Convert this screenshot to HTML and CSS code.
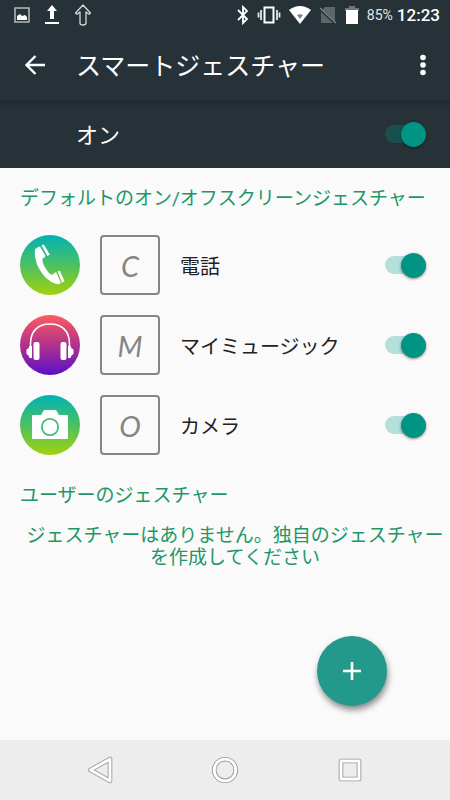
FILE: index.html
```html
<!DOCTYPE html>
<html lang="ja">
<head>
<meta charset="utf-8">
<meta name="viewport" content="width=device-width, initial-scale=1">
<title>スマートジェスチャー</title>
<link rel="stylesheet" href="styles.css">
</head>
<body>
<div class="status">
  <div class="status-group status-notes">
    <svg width="16" height="16" viewBox="0 0 16 16"><path d="M1 1h14v14H1z" fill="none" stroke="#b4babd" stroke-width="1.5"/><path d="M3 13V9l3-2 2 2 3-1 2 2v3z" fill="#fff"/></svg>
    <svg width="16" height="20" viewBox="0 0 16 20"><path d="M8 0l5 6h-3v8H6V6H3zM1 17h14v2H1z" fill="#fff"/></svg>
    <svg width="18" height="22" viewBox="0 0 18 22"><path d="M9 1l7.500 8-1.500 1.200L12 8v11q0 2-3 2t-3-2V8l-3 2.200L1.500 9z" fill="none" stroke="#d4d8da" stroke-width="1.300" stroke-linejoin="round"/></svg>
  </div>
  <div class="status-group status-system">
    <svg width="12" height="20" viewBox="0 0 12 20"><path d="M1 5l9 9-4 4V2l4 4-9 9" fill="none" stroke="#fff" stroke-width="1.800"/></svg>
    <svg width="24" height="18" viewBox="0 0 24 18"><path d="M7.500 1.500h9v15h-9z" fill="none" stroke="#fff" stroke-width="2"/><path d="M4 4v10M20 4v10M1.500 6.500v5M22.500 6.500v5" stroke="#e4e6e7" stroke-width="1.800"/></svg>
    <svg width="22" height="18" viewBox="0 0 22 18"><path d="M0 4q11-8 22 0L11 18z" fill="#fff"/><path d="M8 9q3-1.500 6 0l-3 4z" fill="#7e868a"/></svg>
    <svg width="18" height="18" viewBox="0 0 18 18"><path d="M6 1h10v16H2V5z" fill="#5d666b"/><path d="M0 2l17 16" stroke="#263238" stroke-width="3"/><path d="M1 2l16 15" stroke="#7b8387" stroke-width="1.400"/></svg>
    <svg width="14" height="20" viewBox="0 0 14 20"><path d="M4 1h6v2h4v3H0V3h4z" fill="#6d757a"/><path d="M1 5h12v14H1z" fill="#fff"/></svg>
    <span class="battery">85%</span>
    <span class="clock">12:23</span>
  </div>
</div>

<header class="app-bar">
  <button class="icon-button" type="button" aria-label="戻る">
    <svg width="20" height="20" viewBox="0 0 20 20"><path d="M20 10H2M10.500 1L1.500 10l9 9" fill="none" stroke="#fff" stroke-width="2.400"/></svg>
  </button>
  <h1 class="title">スマートジェスチャー</h1>
  <button class="icon-button menu" type="button" aria-label="その他">
    <svg width="6" height="22" viewBox="0 0 6 22"><g fill="#fff"><circle cx="3" cy="3.500" r="2.800"/><circle cx="3" cy="11" r="2.800"/><circle cx="3" cy="18.500" r="2.800"/></g></svg>
  </button>
</header>

<div class="master">
  <label for="master">オン</label>
  <input class="switch switch-dark" id="master" type="checkbox" role="switch" checked>
</div>

<main class="content">
  <h2 class="section-title">デフォルトのオン/オフスクリーンジェスチャー</h2>
  <ul class="gestures">
    <li class="gesture">
      <svg class="app-icon" viewBox="0 0 60 60">
        <defs><linearGradient id="green" x1="0" y1="0" x2="0" y2="1"><stop offset="0" stop-color="#00b2b5"/><stop offset=".5" stop-color="#4cc063"/><stop offset="1" stop-color="#a1d10c"/></linearGradient></defs>
        <circle cx="30" cy="30" r="30" fill="url(#green)"/>
        <path d="M15 15Q16 12.500 20 11.500L25.500 21Q24.500 23 22.500 23.500Q22 28 26 34Q29 39 32 40L36 37L41 48Q39 50 35 48.500Q27 46 20.500 36Q14 26 15 15z" fill="#fff"/>
        <path d="M21.500 10.500l2.300-1 6 10-2.300 1.400zM37.500 36.700l2.300-1.200 4.700 10.800-2.300 1.400z" fill="#fff"/>
      </svg>
      <span class="sign">C</span>
      <label class="name" for="phone">電話</label>
      <input class="switch" id="phone" type="checkbox" role="switch" checked>
    </li>
    <li class="gesture">
      <svg class="app-icon" viewBox="0 0 60 60">
        <defs><linearGradient id="violet" x1="0" y1="0" x2="0" y2="1"><stop offset="0" stop-color="#ff5a5f"/><stop offset=".5" stop-color="#b0328c"/><stop offset="1" stop-color="#5a10c8"/></linearGradient></defs>
        <circle cx="30" cy="30" r="30" fill="url(#violet)"/>
        <path d="M10.500 32V29C10.500 16 18 9 30 9s19.500 7 19.500 20v3" fill="none" stroke="#fff" stroke-width="1.600"/>
        <path d="M9.500 31h2.500v12H9.500Q9 40 6.500 39V34.500Q9 34 9.500 31zM50.500 31H48v12h2.500q.5-3 3-4v-4.500q-2.500-.5-3-3.500z" fill="#fff"/>
        <rect x="13.500" y="27" width="6" height="18" rx="2" fill="#fff"/><rect x="40.500" y="27" width="6" height="18" rx="2" fill="#fff"/>
      </svg>
      <span class="sign">M</span>
      <label class="name" for="music">マイミュージック</label>
      <input class="switch" id="music" type="checkbox" role="switch" checked>
    </li>
    <li class="gesture">
      <svg class="app-icon" viewBox="0 0 60 60">
        <circle cx="30" cy="30" r="30" fill="url(#green)"/>
        <path d="M13 20h8l3-5h12l3 5h8q1 0 1 1v22q0 1-1 1H13q-1 0-1-1V21q0-1 1-1z" fill="#fff"/>
        <circle cx="30" cy="32" r="8.200" fill="none" stroke="#43bd70" stroke-width="1.800"/>
      </svg>
      <span class="sign">O</span>
      <label class="name" for="camera">カメラ</label>
      <input class="switch" id="camera" type="checkbox" role="switch" checked>
    </li>
  </ul>
  <h2 class="section-title">ユーザーのジェスチャー</h2>
  <p class="empty">ジェスチャーはありません。独自のジェスチャーを作成してください</p>
  <button class="fab" type="button" aria-label="追加">
    <svg width="20" height="20" viewBox="0 0 20 20"><path d="M10 1v18M1 10h18" stroke="#fff" stroke-width="2.600"/></svg>
  </button>
</main>

<nav class="nav">
  <button class="nav-button" type="button" aria-label="戻る">
    <svg width="26" height="28" viewBox="0 0 26 28"><g fill="none" stroke-linejoin="round"><path d="M3.500 14L23 3v22z" stroke="#999" stroke-width="4.600"/><path d="M3.500 14L23 3v22z" stroke="#fff" stroke-width="2.800"/></g></svg>
  </button>
  <button class="nav-button" type="button" aria-label="ホーム">
    <svg width="28" height="28" viewBox="0 0 28 28"><g fill="none"><circle cx="14" cy="14" r="10.800" stroke="#999" stroke-width="4.600"/><circle cx="14" cy="14" r="10.800" stroke="#fff" stroke-width="2.800"/></g></svg>
  </button>
  <button class="nav-button" type="button" aria-label="最近のアプリ">
    <svg width="26" height="26" viewBox="0 0 26 26"><g fill="none" stroke-linejoin="round"><path d="M4 4h18v18H4z" stroke="#999" stroke-width="4.600"/><path d="M4 4h18v18H4z" stroke="#fff" stroke-width="2.800"/></g></svg>
  </button>
</nav>
</body>
</html>
```
FILE: styles.css
```css
* {
  box-sizing: border-box;
}

body {
  margin: 0;
  min-height: 100vh;
  display: flex;
  flex-direction: column;
  background: #fafafa;
  color: #212121;
  font-family: Roboto, "Noto Sans CJK JP", sans-serif;
}

svg {
  display: block;
  flex: none;
}

button {
  display: flex;
  align-items: center;
  justify-content: center;
  padding: 0;
  border: 0;
  background: none;
}

.status {
  height: 30px;
  padding: 0 10px 0 14px;
  display: flex;
  align-items: center;
  justify-content: space-between;
  background: #263238;
  color: #fff;
}

.status-group {
  display: flex;
  align-items: center;
}

.status-notes {
  gap: 14px;
}

.status-system {
  gap: 8px;
}

.battery {
  font-size: 14px;
  color: #e4e6e7;
}

.clock {
  margin-left: -4px;
  font-size: 17px;
  font-weight: 500;
}

.app-bar {
  height: 70px;
  padding: 0 12px 0 20px;
  display: flex;
  align-items: center;
  background: #263238;
  color: #fff;
}

.icon-button {
  width: 30px;
  height: 40px;
}

.title {
  flex: 1;
  margin: 0 0 0 26px;
  padding-top: 4px;
  font-size: 25px;
  line-height: 36px;
  font-weight: 400;
}

.master {
  height: 68px;
  padding: 0 24px 0 76px;
  display: flex;
  align-items: center;
  justify-content: space-between;
  background: linear-gradient(#1f292e, #263238 8px);
  color: #fff;
  font-size: 22px;
}

.master label {
  padding-bottom: 2px;
}

.switch {
  appearance: none;
  position: relative;
  flex: none;
  width: 41px;
  height: 26px;
  margin: 0;
  display: flex;
  align-items: center;
}

.switch::before {
  content: "";
  width: 36px;
  height: 18px;
  border-radius: 9px;
  background: #b5dfda;
}

.switch::after {
  content: "";
  position: absolute;
  right: 0;
  width: 25px;
  height: 25px;
  border-radius: 50%;
  background: #009485;
  box-shadow: 0 1px 3px rgba(0, 0, 0, 0.45);
}

.switch-dark::before {
  background: #1b4f4f;
}

.content {
  position: relative;
  flex: 1;
}

.section-title {
  margin: 0;
  padding: 4px 20px 0;
  color: #1d9767;
  font-size: 19px;
  line-height: 53px;
  font-weight: 400;
}

.gestures {
  margin: 0;
  padding: 0;
  list-style: none;
}

.gesture {
  height: 80px;
  padding: 0 24px 0 20px;
  display: flex;
  align-items: center;
  gap: 20px;
}

.app-icon {
  width: 60px;
  height: 60px;
}

.sign {
  flex: none;
  width: 60px;
  height: 60px;
  display: flex;
  align-items: center;
  justify-content: center;
  border: 2px solid #858585;
  border-radius: 4px;
  color: #858585;
  font-family: Lato, sans-serif;
  font-size: 29px;
  font-style: italic;
}

.name {
  flex: 1;
  font-size: 20px;
}

.empty {
  margin: 0;
  padding: 3px 0 0 20px;
  color: #1d9767;
  font-size: 19px;
  line-height: 22px;
  text-align: center;
}

.fab {
  position: absolute;
  right: 63px;
  bottom: 34px;
  width: 70px;
  height: 70px;
  border-radius: 50%;
  background: #23998c;
  box-shadow: 1px 4px 6px rgba(0, 0, 0, 0.45);
}

.nav {
  height: 60px;
  padding: 0 37px;
  display: flex;
  align-items: center;
  background: #ededed;
}

.nav-button {
  flex: 1;
  height: 60px;
}
```
